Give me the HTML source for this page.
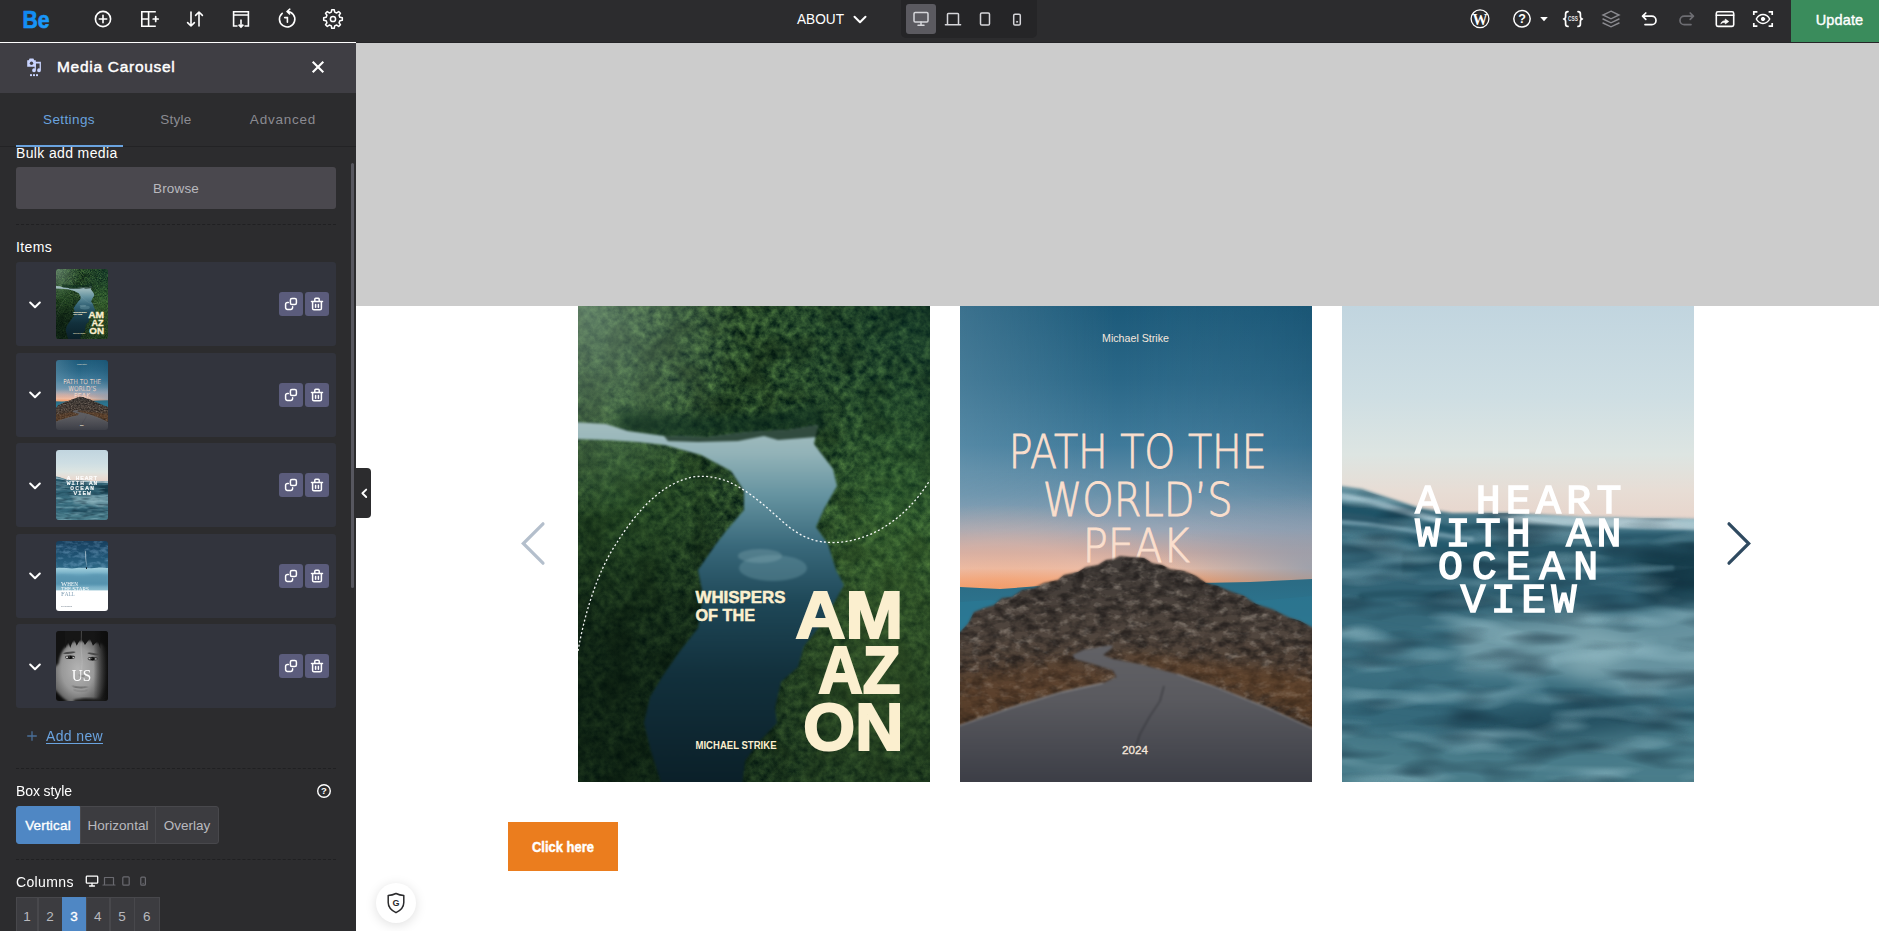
<!DOCTYPE html>
<html lang="en">
<head>
<meta charset="utf-8">
<title>BeBuilder - Media Carousel</title>
<style>
*{box-sizing:border-box;margin:0;padding:0}
html,body{width:1879px;height:931px;overflow:hidden;background:#fff;font-family:"Liberation Sans",sans-serif;}
body{position:relative}
.abs{position:absolute}
svg{display:block}
/* ---------- top bar ---------- */
#topbar{position:absolute;left:0;top:0;width:1879px;height:42px;background:#2c2c2e;z-index:5}
#tbshadow{position:absolute;left:356px;top:42px;width:1523px;height:1px;background:#252527;z-index:5}
#topbar .ico{position:absolute;top:9px;width:20px;height:20px}
#topbar .ico svg{width:20px;height:20px;fill:none;stroke:#fff;stroke-width:1.6;stroke-linecap:round;stroke-linejoin:round}
#logo{position:absolute;left:21px;top:6px;font-weight:bold;font-size:24px;letter-spacing:-1.5px;color:#2d8df6;line-height:26px}
#pagename{position:absolute;left:797px;top:10px;font-size:14px;color:#fff;line-height:18px;letter-spacing:-0.2px}
#devices{position:absolute;left:901px;top:0;width:136px;height:38px;background:#252527;border-radius:0 0 5px 5px}
#devices .act{position:absolute;left:5px;top:4px;width:30px;height:30px;background:#5b5a60;border-radius:3px}
#update{position:absolute;left:1791px;top:0;width:88px;height:42px;background:#3a8c5c;color:#fff;font-size:14.5px;font-weight:normal;-webkit-text-stroke:.4px #fff;letter-spacing:.12px;line-height:40px;text-align:center;padding-left:9px}
/* ---------- left panel ---------- */
#panel{position:absolute;left:0;top:43px;width:356px;height:888px;background:#2c2c2e;overflow:hidden;z-index:4}
#phead{position:absolute;left:0;top:-1px;width:356px;height:51px;background:#3f3e44}
#phead .title{position:absolute;left:57px;top:14.400px;font-size:15.5px;font-weight:normal;-webkit-text-stroke:.45px #fff;letter-spacing:.71px;color:#fff;line-height:22px}
#tabs{position:absolute;left:0;top:50px;width:356px;height:54px;border-bottom:1px solid #232325}
#tabs span{position:absolute;top:18px;font-size:13.5px;letter-spacing:.4px;line-height:18px;color:#8b8b92;transform:translateX(-50%);white-space:nowrap}
#tabs .on{color:#6aa3df}
#tabs i{position:absolute;left:16px;top:52px;width:107px;height:2px;background:#6aa3df}
.lbl{position:absolute;left:16px;letter-spacing:.36px;font-size:14px;color:#fff;line-height:18px;white-space:nowrap}
.dash{position:absolute;left:16px;width:320px;height:0;border-top:1px dashed #202022}
#browse{letter-spacing:.16px;position:absolute;left:16px;top:124px;width:320px;height:42px;background:#4a484e;border-radius:3px;color:#b9b9be;font-size:13.5px;text-align:center;line-height:43px}
.item{position:absolute;left:16px;width:320px;height:84px;background:#32343d;border-radius:3px}
.item .th{position:absolute;left:40px;top:7px;width:52px;height:70px;border-radius:3px;overflow:hidden}
.item .b{position:absolute;top:30px;width:24px;height:24px;background:#5b5c7c;border-radius:3px}
.item .b1{left:263px}.item .b2{left:289px}
.item svg.chev{position:absolute;left:13px;top:38.500px;width:12px;height:8px}
#scroll{position:absolute;left:351.400px;top:120px;width:2.400px;height:425px;background:#57575f;border-radius:2px}
.seg.first{border-radius:3px 0 0 3px}.seg.last{border-radius:0 3px 3px 0}
.seg{position:absolute;height:38px;font-size:13.5px;line-height:38px;text-align:center;color:#b9b9be;background:#3c3c40;border:1px solid #48484c;white-space:nowrap}
.seg.on{background:#4f87c4;border-color:#4f87c4;color:#fff;-webkit-text-stroke:.35px #fff;letter-spacing:.18px}
.addnew{letter-spacing:.36px;position:absolute;left:46px;top:684px;font-size:14px;line-height:18px;color:#6aa3df;text-decoration:underline;text-underline-offset:2px;white-space:nowrap}
.num{position:absolute;top:854px;height:40px;font-size:13.500px;line-height:38px;text-align:center;color:#b9b9be;background:#3c3c40;border:1px solid #48484c}
.num.on{background:#4f87c4;border-color:#4f87c4;color:#fff;-webkit-text-stroke:.35px #fff}
.item .b svg{display:block}
/* ---------- canvas ---------- */
#grey{position:absolute;left:356px;top:43px;width:1523px;height:263px;background:#cccccc}
.cover{position:absolute;top:306px;width:352px;height:476px;overflow:hidden}
#cta{position:absolute;left:508px;top:822px;width:110px;height:49px;background:#eb7d1e;color:#fff;font-size:15px;font-weight:bold;text-align:center;line-height:50px}
#handle{position:absolute;left:356px;top:468px;width:15px;height:50px;background:#2c2c2e;border-radius:0 4px 4px 0;z-index:6}
#shield{position:absolute;left:376px;top:883px;width:40px;height:40px;border-radius:50%;background:#fff;box-shadow:0 2px 12px rgba(0,0,0,.13)}
</style>
</head>
<body>
<svg width="0" height="0" style="position:absolute">
<symbol id="cov1" viewBox="0 0 352 476" preserveAspectRatio="none">
  <defs>
    <linearGradient id="c1g" x1="0" y1="0" x2="0" y2="1">
      <stop offset="0" stop-color="#2f5c3c"/>
      <stop offset=".25" stop-color="#264f30"/>
      <stop offset=".5" stop-color="#234d2a"/>
      <stop offset=".7" stop-color="#16371f"/>
      <stop offset="1" stop-color="#0d2515"/>
    </linearGradient>
    <linearGradient id="c1r" x1="0" y1="118" x2="0" y2="476" gradientUnits="userSpaceOnUse">
      <stop offset="0" stop-color="#a3bdbf"/>
      <stop offset=".08" stop-color="#93b3b8"/>
      <stop offset=".2" stop-color="#6593a0"/>
      <stop offset=".34" stop-color="#39697b"/>
      <stop offset=".5" stop-color="#1e4757"/>
      <stop offset=".7" stop-color="#12303c"/>
      <stop offset="1" stop-color="#0b2029"/>
    </linearGradient>
    <radialGradient id="c1d" cx=".08" cy=".8" r=".6" gradientTransform="translate(0 0) scale(1 1)">
      <stop offset="0" stop-color="#06150c" stop-opacity=".62"/>
      <stop offset=".45" stop-color="#06150c" stop-opacity=".42"/>
      <stop offset="1" stop-color="#07170e" stop-opacity="0"/>
    </radialGradient>
    <radialGradient id="c1tr" cx="1" cy="0" r=".5">
      <stop offset="0" stop-color="#06302e" stop-opacity=".38"/>
      <stop offset="1" stop-color="#06302e" stop-opacity="0"/>
    </radialGradient>
    <radialGradient id="c1ml" cx=".12" cy=".4" r=".3">
      <stop offset="0" stop-color="#4f9440" stop-opacity=".34"/>
      <stop offset="1" stop-color="#5a9a3a" stop-opacity="0"/>
    </radialGradient>
    <radialGradient id="c1mr" cx=".92" cy=".42" r=".32">
      <stop offset="0" stop-color="#4f9440" stop-opacity=".3"/>
      <stop offset="1" stop-color="#5a9a3a" stop-opacity="0"/>
    </radialGradient>
    <radialGradient id="c1l" cx=".85" cy=".78" r=".4">
      <stop offset="0" stop-color="#5d8a3c" stop-opacity=".45"/>
      <stop offset="1" stop-color="#5d8a3c" stop-opacity="0"/>
    </radialGradient>
    <filter id="c1n" x="0" y="0" width="100%" height="100%" color-interpolation-filters="sRGB">
      <feTurbulence type="fractalNoise" baseFrequency="0.13" numOctaves="4" seed="7"/>
      <feColorMatrix type="matrix" values="0.44 0 0 0 -0.058  0.54 0 0 0 0.028  0.25 0 0 0 0.04  0 0 0 0 1"/>
    </filter>
    <filter id="c1h" x="0" y="0" width="100%" height="100%" color-interpolation-filters="sRGB">
      <feTurbulence type="fractalNoise" baseFrequency="0.035" numOctaves="2" seed="3"/>
      <feColorMatrix type="matrix" values="0 0 0 0 0.02  0 0 0 0 0.08  0 0 0 0 0.04  0 3 0 0 -1.25"/>
    </filter>
    <radialGradient id="c1z" cx=".02" cy="0" r=".45">
      <stop offset="0" stop-color="#86a68f" stop-opacity=".6"/>
      <stop offset="1" stop-color="#86a68f" stop-opacity="0"/>
    </radialGradient>
    <linearGradient id="c1k" x1="0" y1="0" x2="0" y2="1">
      <stop offset="0" stop-color="#04120a" stop-opacity="0"/>
      <stop offset=".5" stop-color="#04120a" stop-opacity=".05"/>
      <stop offset=".72" stop-color="#04120a" stop-opacity=".28"/>
      <stop offset="1" stop-color="#04120a" stop-opacity=".38"/>
    </linearGradient>
    <filter id="c1bb" x="-10%" y="-60%" width="120%" height="220%" color-interpolation-filters="sRGB"><feGaussianBlur stdDeviation="5"/></filter>
    <filter id="c1b" x="-5%" y="-5%" width="110%" height="110%" color-interpolation-filters="sRGB"><feGaussianBlur stdDeviation="1.2"/></filter>
    <clipPath id="c1c"><rect width="352" height="476"/></clipPath>
  </defs>
  <g clip-path="url(#c1c)">
    <rect width="352" height="476" fill="url(#c1g)"/>
    <rect width="352" height="476" filter="url(#c1n)"/>
    <rect width="352" height="476" filter="url(#c1h)" opacity=".4"/>
    <rect width="352" height="476" fill="url(#c1ml)"/>
    <rect width="352" height="476" fill="url(#c1mr)"/>
    <rect width="352" height="476" fill="url(#c1l)"/>
    <rect width="352" height="476" fill="url(#c1k)"/>
    <rect width="352" height="476" fill="url(#c1d)"/>
    <rect width="352" height="476" fill="url(#c1z)"/>
    <rect width="352" height="476" fill="url(#c1tr)"/>
    <path d="M40 104 C100 112 180 110 244 100 L246 124 L170 130 L86 134 L40 128 Z" fill="#0c2a1e" opacity=".6" filter="url(#c1bb)"/>
    <!-- river -->
    <g filter="url(#c1b)">
      <path d="M-4 116 L28 118 L50 125 L86 130 L130 131 L170 126 L210 124 L240 119 L236 138 L255 163 L259 180 L246 203 L238 221 L250 238 L258 264 L266 279 L246 315 L226 340 L220 361 L203 376 L197 402 L199 417 L180 437 L167 455 L164 480 L84 480 L72 442 L66 417 L72 391 L84 371 L102 345 L120 322 L125 289 L120 264 L138 238 L148 225 L166 204 L166 185 L153 165 L123 149 L87 139 L60 136 L30 134 L-4 133 Z" fill="url(#c1r)"/>
      <path d="M86 130 L130 131 L170 126 L210 124 L240 119 L238 131 L200 134 L186 130 L160 135 L120 136 L90 135 Z" fill="#16301f" opacity=".8"/>
      <ellipse cx="195" cy="262" rx="34" ry="13" fill="#6e9aa8" opacity=".4"/>
      <ellipse cx="182" cy="250" rx="22" ry="7" fill="#86abb4" opacity=".35"/>
    </g>
    <!-- dotted line -->
    <path d="M0 345 C8 300 22 262 38 238 C56 210 80 178 115 171 C150 166 176 190 204 215 C222 231 236 237 258 236.500 C290 235 326 216 352 174" fill="none" stroke="#fff" stroke-width="1.300" stroke-dasharray="2 2.300" opacity=".95"/>
    <!-- text -->
    <g fill="#fbefcf" font-family="Liberation Sans, sans-serif" font-weight="bold">
      <text x="117.500" y="296.600" font-size="16.500" textLength="90" stroke="#fbefcf" stroke-width=".5" lengthAdjust="spacingAndGlyphs">WHISPERS</text>
      <text x="117.500" y="315.200" font-size="16.500" textLength="59.500" stroke="#fbefcf" stroke-width=".5" lengthAdjust="spacingAndGlyphs">OF THE</text>
      <text x="217.600" y="331.600" font-size="66" textLength="107.500" lengthAdjust="spacingAndGlyphs" stroke="#fbefcf" stroke-width="2.2" stroke-linejoin="miter">AM</text>
      <text x="240.300" y="387.400" font-size="66" textLength="82" lengthAdjust="spacingAndGlyphs" stroke="#fbefcf" stroke-width="2.2" stroke-linejoin="miter">AZ</text>
      <text x="225.300" y="443.900" font-size="66" textLength="100" lengthAdjust="spacingAndGlyphs" stroke="#fbefcf" stroke-width="2.2" stroke-linejoin="miter">ON</text>
      <text x="117.500" y="442.700" font-size="10.500" textLength="81" lengthAdjust="spacingAndGlyphs">MICHAEL STRIKE</text>
    </g>
  </g>
</symbol>

<symbol id="cov2" viewBox="0 0 352 476" preserveAspectRatio="none">
  <defs>
    <linearGradient id="c2s" x1="0" y1="0" x2="0" y2="290" gradientUnits="userSpaceOnUse">
      <stop offset="0" stop-color="#1c5a7a"/>
      <stop offset=".25" stop-color="#2a6787"/>
      <stop offset=".48" stop-color="#3f7a9a"/>
      <stop offset=".65" stop-color="#6a92ab"/>
      <stop offset=".77" stop-color="#9aa6b6"/>
      <stop offset=".85" stop-color="#c6a9a3"/>
      <stop offset=".905" stop-color="#e8bca6"/>
      <stop offset=".94" stop-color="#f0a274"/>
      <stop offset=".965" stop-color="#ef945c"/>
      <stop offset="1" stop-color="#ec8a54"/>
    </linearGradient>
    <radialGradient id="c2o" cx="40" cy="278" r="190" gradientUnits="userSpaceOnUse" gradientTransform="translate(0 278) scale(1 .42) translate(0 -278)">
      <stop offset="0" stop-color="#f6b08a" stop-opacity=".4"/>
      <stop offset=".5" stop-color="#f2bba4" stop-opacity=".4"/>
      <stop offset="1" stop-color="#f2b398" stop-opacity="0"/>
    </radialGradient>
    <radialGradient id="c2q" cx="352" cy="262" r="150" gradientUnits="userSpaceOnUse" gradientTransform="translate(0 262) scale(1 .5) translate(0 -262)">
      <stop offset="0" stop-color="#8096ad" stop-opacity=".7"/>
      <stop offset="1" stop-color="#8096ad" stop-opacity="0"/>
    </radialGradient>
    <linearGradient id="c2l" x1="0" y1="0" x2="1" y2="0">
      <stop offset="0" stop-color="#8fb0c2" stop-opacity=".35"/>
      <stop offset=".45" stop-color="#8fb0c2" stop-opacity="0"/>
      <stop offset="1" stop-color="#0b3c58" stop-opacity=".18"/>
    </linearGradient>
    <linearGradient id="c2m" x1="0" y1="276" x2="0" y2="335" gradientUnits="userSpaceOnUse">
      <stop offset="0" stop-color="#2b6c85"/>
      <stop offset="1" stop-color="#2f7e99"/>
    </linearGradient>
    <linearGradient id="c2h" x1="0" y1="250" x2="0" y2="430" gradientUnits="userSpaceOnUse">
      <stop offset="0" stop-color="#3f3a37"/>
      <stop offset=".45" stop-color="#51463e"/>
      <stop offset=".75" stop-color="#574232"/>
      <stop offset="1" stop-color="#4a3626"/>
    </linearGradient>
    <linearGradient id="c2r" x1="0" y1="338" x2="0" y2="476" gradientUnits="userSpaceOnUse">
      <stop offset="0" stop-color="#626266"/>
      <stop offset=".4" stop-color="#5a5a5f"/>
      <stop offset=".75" stop-color="#494a51"/>
      <stop offset="1" stop-color="#3c3e46"/>
    </linearGradient>
    <filter id="c2n" x="0" y="0" width="100%" height="100%" color-interpolation-filters="sRGB">
      <feTurbulence type="fractalNoise" baseFrequency="0.09 0.13" numOctaves="3" seed="11"/>
      <feColorMatrix type="matrix" values="0 0 0 0 0.62  0 0 0 0 0.58  0 0 0 0 0.54  2.8 0 0 0 -1.45"/>
    </filter>
    <filter id="c2d" x="0" y="0" width="100%" height="100%" color-interpolation-filters="sRGB">
      <feTurbulence type="fractalNoise" baseFrequency="0.08 0.12" numOctaves="3" seed="4"/>
      <feColorMatrix type="matrix" values="0 0 0 0 0.08  0 0 0 0 0.07  0 0 0 0 0.07  0 2.6 0 0 -1.0"/>
    </filter>
    <filter id="c2b" x="-5%" y="-5%" width="110%" height="110%" color-interpolation-filters="sRGB"><feGaussianBlur stdDeviation=".8"/></filter>
    <filter id="c2bb" x="-20%" y="-40%" width="140%" height="180%" color-interpolation-filters="sRGB"><feGaussianBlur stdDeviation="5"/></filter>
    <linearGradient id="c2lg" x1="0" y1="0" x2="0" y2="1"><stop offset="0" stop-color="#fff"/><stop offset=".55" stop-color="#fff"/><stop offset=".82" stop-color="#000"/></linearGradient>
    <mask id="c2lm" maskUnits="userSpaceOnUse" x="0" y="0" width="352" height="300"><rect width="352" height="300" fill="url(#c2lg)"/></mask>
    <clipPath id="c2c"><rect width="352" height="476"/></clipPath>
    <clipPath id="c2hc"><path d="M-2 328 L8 318 L14 306 L24 302 L34 299 L42 292 L52 291 L62 284 L74 282 L84 277 L98 274 L104 269 L118 266 L126 261 L138 259 L146 254 L154 253 L160 250 L170 251 L184 252 L192 257 L202 259 L210 263 L224 265 L236 270 L246 277 L258 280 L270 285 L284 290 L296 298 L312 303 L328 311 L340 315 L354 322 L354 430 L-2 430 Z"/></clipPath>
  </defs>
  <g clip-path="url(#c2c)">
    <rect width="352" height="300" fill="url(#c2s)"/>
    <rect width="352" height="300" fill="url(#c2l)" opacity=".8" mask="url(#c2lm)"/>
    <rect width="352" height="300" fill="url(#c2q)"/>
    <rect width="352" height="300" fill="url(#c2o)"/>
    <!-- title (PEAK is partly behind the hill) -->
    <g fill="#fbdfcd" font-family="DejaVu Sans, Liberation Sans, sans-serif" font-weight="200" font-size="46" text-anchor="middle" stroke="#fbdfcd" stroke-width=".85">
      <text x="177.700" y="161.800" textLength="258" lengthAdjust="spacingAndGlyphs">PATH TO THE</text>
      <text x="177.650" y="209.600" textLength="190" lengthAdjust="spacingAndGlyphs">WORLD’S</text>
      <text x="176.250" y="256.400" textLength="107" lengthAdjust="spacingAndGlyphs">PEAK</text>
    </g>
    <!-- distant mountains -->
    <path d="M0 281 L40 283 L80 280 L80 340 L0 340 Z" fill="url(#c2m)"/>
    <path d="M240 277 L290 276 L352 273 L352 340 L240 340 Z" fill="url(#c2m)"/>
    <path d="M0 296 L30 294 L70 300 L70 340 L0 340 Z" fill="#2a7893" opacity=".8"/>
    <path d="M285 296 L352 290 L352 330 L300 320 Z" fill="#2c7590" opacity=".8"/>
    <!-- hill -->
    <g filter="url(#c2b)">
      <path d="M-2 328 L8 318 L14 306 L24 302 L34 299 L42 292 L52 291 L62 284 L74 282 L84 277 L98 274 L104 269 L118 266 L126 261 L138 259 L146 254 L154 253 L160 250 L170 251 L184 252 L192 257 L202 259 L210 263 L224 265 L236 270 L246 277 L258 280 L270 285 L284 290 L296 298 L312 303 L328 311 L340 315 L354 322 L354 430 L-2 430 Z" fill="url(#c2h)"/>
    </g>
    <g clip-path="url(#c2hc)">
      <rect y="245" width="352" height="190" filter="url(#c2n)" opacity=".6"/>
      <rect y="245" width="352" height="190" filter="url(#c2d)" opacity=".6"/>
      <path d="M-2 372 L60 362 L110 352 L112 357 L140 366 L157 375 L150 384 L95 390 L40 404 L-2 420 Z" fill="#664428" opacity=".36" filter="url(#c2bb)"/>
      <path d="M145 348 L200 364 L260 378 L320 396 L354 414 L354 372 L300 362 L240 356 L180 348 Z" fill="#6c4626" opacity=".42" filter="url(#c2bb)"/>
    </g>
    <!-- road -->
    <g filter="url(#c2b)">
      <path d="M148 339.500 L123 344 L112.500 349 L115 353 L133 358 L153 364.500 L156.500 371 L143 377 L102 386 L51 401.600 L-2 420 L-2 478 L354 478 L354 423 L307 401.600 L255.600 381 L217 368 L179 358 L153 353 L143 349 L151 343 L153.500 339.500 Z" fill="url(#c2r)"/>
      <path d="M-2 420 L51 401.600 L102 386 L143 377" fill="none" stroke="#9a9a9c" stroke-width="1.3" opacity=".75"/>
      <path d="M217 368 L255.600 381 L307 401.600 L354 423" fill="none" stroke="#9a9a9c" stroke-width="1.3" opacity=".7"/>
      <path d="M204 380 L200 395 L190 410 L180 428 L174 446" fill="none" stroke="#24252b" stroke-width="1" opacity=".8"/>
    </g>
    <g fill="#f6e7dd" font-family="Liberation Sans, sans-serif" text-anchor="middle">
      <text x="175.500" y="36.300" font-size="11" textLength="67" lengthAdjust="spacingAndGlyphs">Michael Strike</text>
      <text x="175" y="447.600" font-size="11" stroke="#f6e7dd" stroke-width=".3" textLength="26" lengthAdjust="spacingAndGlyphs">2024</text>
    </g>
  </g>
</symbol>

<symbol id="cov3" viewBox="0 0 352 476" preserveAspectRatio="none">
  <defs>
    <linearGradient id="c3s" x1="0" y1="0" x2="0" y2="225" gradientUnits="userSpaceOnUse">
      <stop offset="0" stop-color="#c1d5df"/>
      <stop offset=".4" stop-color="#cedee3"/>
      <stop offset=".66" stop-color="#dde5e2"/>
      <stop offset=".82" stop-color="#e7ddd5"/>
      <stop offset="1" stop-color="#e8d2c8"/>
    </linearGradient>
    <linearGradient id="c3w" x1="0" y1="180" x2="0" y2="476" gradientUnits="userSpaceOnUse">
      <stop offset="0" stop-color="#5f8b99"/>
      <stop offset=".12" stop-color="#3f7082"/>
      <stop offset=".3" stop-color="#2f6073"/>
      <stop offset=".55" stop-color="#3b6f80"/>
      <stop offset=".8" stop-color="#34687a"/>
      <stop offset="1" stop-color="#3a6e7e"/>
    </linearGradient>
    <filter id="c3n" x="0" y="0" width="100%" height="100%" color-interpolation-filters="sRGB">
      <feTurbulence type="fractalNoise" baseFrequency="0.012 0.05" numOctaves="2" seed="5"/>
      <feColorMatrix type="matrix" values="0 0 0 0 0.62  0 0 0 0 0.78  0 0 0 0 0.82  2.6 0 0 0 -1.25"/>
    </filter>
    <filter id="c3d" x="0" y="0" width="100%" height="100%" color-interpolation-filters="sRGB">
      <feTurbulence type="fractalNoise" baseFrequency="0.014 0.055" numOctaves="2" seed="17"/>
      <feColorMatrix type="matrix" values="0 0 0 0 0.06  0 0 0 0 0.16  0 0 0 0 0.22  0 2.6 0 0 -1.2"/>
    </filter>
    <filter id="c3b" x="-5%" y="-5%" width="110%" height="110%" color-interpolation-filters="sRGB"><feGaussianBlur stdDeviation="1.6"/></filter>
    <filter id="c3bb" x="-30%" y="-30%" width="160%" height="160%" color-interpolation-filters="sRGB"><feGaussianBlur stdDeviation="9"/></filter>
    <clipPath id="c3c"><rect width="352" height="476"/></clipPath>
    <clipPath id="c3wc"><path d="M-4 180 L20 184 L50 194 L78 203 L110 207 L170 207 L240 211 L300 212 L356 213 L356 480 L-4 480 Z"/></clipPath>
  </defs>
  <g clip-path="url(#c3c)">
    <rect width="352" height="240" fill="url(#c3s)"/>
    <g filter="url(#c3b)">
      <path d="M-8 179 L20 183 L50 193 L78 202 L110 207 L170 207 L240 211 L300 212 L360 213 L360 490 L-8 490 Z" fill="url(#c3w)"/>
      <path d="M150 209 L240 211 L300 212 L360 213 L360 224 L300 223 L230 221 L170 216 Z" fill="#a5bfc8" opacity=".75"/>
      <path d="M-8 196 L40 204 L90 216 L60 222 L-8 214 Z" fill="#1f4a5c" opacity=".7"/>
      <path d="M60 246 L170 232 L250 240 L352 236 L352 258 L250 262 L160 256 L60 268 Z" fill="#204c5e" opacity=".6"/>
    </g>
    <g filter="url(#c3bb)">
      <path d="M230 326 L372 300 L372 382 L300 390 L225 372 Z" fill="#7aa3ae" opacity=".7"/>
      <path d="M110 408 L260 392 L340 420 L260 440 L130 436 Z" fill="#1b4454" opacity=".65"/>
      <path d="M-20 326 L120 348 L210 372 L100 384 L-20 370 Z" fill="#3e7284" opacity=".5"/>
      <path d="M120 290 L260 280 L300 300 L200 312 Z" fill="#1f4a5b" opacity=".5"/>
      <path d="M290 246 L372 240 L372 296 L300 292 Z" fill="#123644" opacity=".85"/>
      <path d="M110 318 L250 306 L300 340 L250 372 L120 364 Z" fill="#84abb5" opacity=".7"/>
      <path d="M-20 420 L150 440 L372 410 L372 490 L-20 490 Z" fill="#5a8b97" opacity=".5"/>
    </g>
    <g filter="url(#c3b)" fill="none" stroke-linecap="round">
      <path d="M-5 190 C25 192 55 204 95 214" stroke="#a8c6d1" stroke-width="6" opacity=".85"/>
      <path d="M-5 203 C30 204 60 214 110 224" stroke="#1c5266" stroke-width="7" opacity=".8"/>
      <path d="M-5 216 C30 216 70 226 130 233" stroke="#8fb4c3" stroke-width="4" opacity=".6"/>
      <path d="M-5 230 C40 228 90 240 150 244" stroke="#1d5468" stroke-width="8" opacity=".7"/>
      <path d="M120 222 C170 216 220 226 262 222" stroke="#1b4656" stroke-width="6" opacity=".6"/>
      <path d="M170 214 C240 216 300 217 356 219" stroke="#b4cad2" stroke-width="8" opacity=".8"/>
      <path d="M230 232 C270 228 320 232 356 230" stroke="#1f4f60" stroke-width="6" opacity=".55"/>
      <path d="M150 268 C200 258 260 268 330 262" stroke="#5f8f9f" stroke-width="5" opacity=".5"/>
      <path d="M20 290 C80 282 140 296 200 292" stroke="#1c4858" stroke-width="7" opacity=".5"/>
    </g>
    <g clip-path="url(#c3wc)">
      <rect y="180" width="352" height="296" filter="url(#c3n)" opacity=".55"/>
      <rect y="180" width="352" height="296" filter="url(#c3d)" opacity=".5"/>
    </g>
    <g fill="#fff" font-family="Liberation Mono, monospace" font-weight="normal" font-size="41.500" text-anchor="middle" stroke="#fff" stroke-width="1.500" stroke-linejoin="miter">
      <text x="176.300" y="206.500" textLength="206" lengthAdjust="spacing">A HEART</text>
      <text x="176.300" y="239.800" textLength="206" lengthAdjust="spacing">WITH AN</text>
      <text x="176.100" y="273" textLength="160" lengthAdjust="spacing">OCEAN</text>
      <text x="176.500" y="306" textLength="116" lengthAdjust="spacing">VIEW</text>
    </g>
  </g>
</symbol>

<symbol id="cov4" viewBox="0 0 352 476" preserveAspectRatio="none">
  <defs>
    <linearGradient id="c4s" x1="0" y1="0" x2="0" y2="190" gradientUnits="userSpaceOnUse">
      <stop offset="0" stop-color="#173f5e"/><stop offset=".5" stop-color="#1f5272"/><stop offset="1" stop-color="#2f6a88"/>
    </linearGradient>
    <linearGradient id="c4i" x1="0" y1="180" x2="0" y2="340" gradientUnits="userSpaceOnUse">
      <stop offset="0" stop-color="#a5d2e0"/><stop offset=".3" stop-color="#6faac2"/><stop offset=".7" stop-color="#5f9db8"/><stop offset="1" stop-color="#93c2d2"/>
    </linearGradient>
    <linearGradient id="c4b" x1="0" y1="1" x2="0" y2="0">
      <stop offset="0" stop-color="#fff" stop-opacity=".95"/><stop offset="1" stop-color="#cfe6f2" stop-opacity=".15"/>
    </linearGradient>
    <filter id="c4n" x="0" y="0" width="100%" height="100%" color-interpolation-filters="sRGB">
      <feTurbulence type="fractalNoise" baseFrequency="0.02 0.035" numOctaves="3" seed="9"/>
      <feColorMatrix type="matrix" values="0 0 0 0 0.55  0 0 0 0 0.72  0 0 0 0 0.85  2.8 0 0 0 -1.2"/>
    </filter>
    <filter id="c4g" x="-20%" y="-40%" width="140%" height="180%"><feGaussianBlur stdDeviation="3"/></filter><filter id="c4h" x="-20%" y="-60%" width="140%" height="220%"><feGaussianBlur stdDeviation="9"/></filter>
    <clipPath id="c4c"><rect width="352" height="476"/></clipPath>
  </defs>
  <g clip-path="url(#c4c)">
    <rect width="352" height="200" fill="url(#c4s)"/>
    <rect width="352" height="185" filter="url(#c4n)" opacity=".38"/>
    <path d="M-5 186 C40 176 90 192 140 184 C180 178 230 190 280 182 C310 178 340 186 357 182 L357 340 L-5 340 Z" fill="url(#c4i)"/>
    <path d="M-5 230 C60 215 150 245 230 228 C290 218 330 232 357 226 L357 300 L-5 300 Z" fill="#4d89a6" opacity=".5" filter="url(#c4h)"/>
    <path d="M206 178 L192 56 L204 54 Z" fill="url(#c4b)" filter="url(#c4g)" opacity=".7"/>
    <path d="M206 180 L196 70 L201 69 Z" fill="#fff" opacity=".55"/>
    <path d="M203 190 L203.500 178 A3 3 0 0 1 209 178 L210 190 Z" fill="#0f1d28"/>
    <rect y="336" width="352" height="140" fill="#fff"/>
    <g font-family="Liberation Serif, serif" font-size="45" fill="#fff">
      <text x="34" y="303">W<tspan font-size="35">HEN</tspan></text>
      <text x="34" y="337"><tspan font-size="35">THE </tspan>S<tspan font-size="35">TARS</tspan></text>
      <text x="34" y="371" fill="#7f9db2">F<tspan font-size="35">ALL</tspan></text>
    </g>
    <text x="34" y="449" font-family="Liberation Sans, sans-serif" font-size="9" fill="#5a6a78">MICHAEL STRIKE</text>
  </g>
</symbol>

<symbol id="cov5" viewBox="0 0 352 476" preserveAspectRatio="none">
  <defs>
    <radialGradient id="c5f" cx=".42" cy=".55" r=".62">
      <stop offset="0" stop-color="#b4b4b4"/><stop offset=".5" stop-color="#999"/><stop offset=".85" stop-color="#5c5c5c"/><stop offset="1" stop-color="#2a2a2a"/>
    </radialGradient>
    <linearGradient id="c5r" x1="0" y1="0" x2="1" y2="0">
      <stop offset=".72" stop-color="#0c0c0c" stop-opacity="0"/><stop offset="1" stop-color="#0c0c0c" stop-opacity=".95"/>
    </linearGradient>
    <filter id="c5g" x="-20%" y="-20%" width="140%" height="140%" color-interpolation-filters="sRGB"><feGaussianBlur stdDeviation="7"/></filter>
    <filter id="c5s" x="-20%" y="-20%" width="140%" height="140%" color-interpolation-filters="sRGB"><feGaussianBlur stdDeviation="2.500"/></filter>
    <clipPath id="c5c"><rect width="352" height="476"/></clipPath>
  </defs>
  <g clip-path="url(#c5c)">
    <rect width="352" height="476" fill="url(#c5f)"/>
    <path d="M-20 -20 L372 -20 L372 170 C350 110 320 80 280 84 C250 60 210 58 176 72 C140 60 100 74 70 104 C40 130 25 170 18 220 L-20 260 Z" fill="#121212" filter="url(#c5g)"/>
    <path d="M60 120 L80 60 L96 116 L120 50 L140 100 L170 46 L196 96 L230 50 L250 100 L284 64 L300 120 L300 0 L60 0 Z" fill="#161616" filter="url(#c5s)"/>
    <rect width="352" height="476" fill="url(#c5r)"/>
    <path d="M-20 380 C10 420 40 455 90 485 L-20 490 Z" fill="#0d0d0d" filter="url(#c5g)"/>
    <path d="M120 470 C180 452 260 452 330 476 L330 490 L120 490 Z" fill="#1a1a1a" filter="url(#c5g)"/>
    <g filter="url(#c5s)">
      <ellipse cx="95" cy="178" rx="34" ry="13" fill="#3a3a3a"/><ellipse cx="248" cy="188" rx="34" ry="13" fill="#3a3a3a"/>
      <ellipse cx="96" cy="179" rx="13" ry="11" fill="#0c0c0c"/><ellipse cx="247" cy="189" rx="13" ry="11" fill="#0c0c0c"/>
      <ellipse cx="74" cy="178" rx="8" ry="5" fill="#d8d8d8"/><ellipse cx="118" cy="181" rx="7" ry="4" fill="#d0d0d0"/>
      <ellipse cx="226" cy="188" rx="7" ry="4" fill="#d0d0d0"/><ellipse cx="269" cy="190" rx="7" ry="4" fill="#c8c8c8"/>
      <ellipse cx="90" cy="148" rx="42" ry="7" fill="#4a4a4a" transform="rotate(-6 90 148)"/><ellipse cx="254" cy="156" rx="42" ry="7" fill="#4a4a4a" transform="rotate(8 254 156)"/>
      <path d="M104 372 C140 380 186 384 222 378 C190 392 136 390 104 372 Z" fill="#454545"/>
      <path d="M150 296 C164 306 190 306 204 296 C196 312 160 312 150 296 Z" fill="#5a5a5a"/>
      <path d="M120 400 C150 412 190 412 214 402" fill="none" stroke="#777" stroke-width="6"/>
    </g>
    <circle cx="92" cy="176" r="2.500" fill="#f0f0f0"/><circle cx="243" cy="186" r="2.500" fill="#f0f0f0"/>
    <path d="M172 0 L170 120 L177 200 L174 262" fill="none" stroke="#cfcfcf" stroke-width="2.500" opacity=".75"/>
    <text x="172" y="342" font-family="Liberation Serif, serif" font-size="112" fill="#fff" text-anchor="middle" textLength="132" lengthAdjust="spacingAndGlyphs">US</text>
  </g>
</symbol>

</svg>
<!-- CANVAS -->
<div id="grey"></div>
<div class="cover" id="c1" style="left:578px;background:#1d4a38"><svg width="352" height="476"><use href="#cov1" width="352" height="476"/></svg></div>
<div class="cover" id="c2" style="left:960px;background:#3a6a80"><svg width="352" height="476"><use href="#cov2" width="352" height="476"/></svg></div>
<div class="cover" id="c3" style="left:1342px;background:#6a98a8"><svg width="352" height="476"><use href="#cov3" width="352" height="476"/></svg></div>
<div id="cta"><svg width="110" height="49" viewBox="0 0 110 49"><text x="24" y="30" font-family="Liberation Sans, sans-serif" font-size="14.800" fill="#fff" stroke="#fff" stroke-width=".45" textLength="62" lengthAdjust="spacingAndGlyphs">Click here</text></svg></div>
<div id="handle"><svg width="15" height="50" viewBox="0 0 15 50"><path d="M10.200 21.600L6.400 25.300L10.200 29" fill="none" stroke="#fff" stroke-width="1.900" stroke-linecap="round" stroke-linejoin="round"/></svg></div>
<svg width="30" height="50" viewBox="0 0 30 50" style="position:absolute;left:518px;top:519px"><path d="M25 4.800L5.300 24.500L25 44.200" fill="none" stroke="#b4bfcc" stroke-width="3.200" stroke-linecap="round" stroke-linejoin="miter"/></svg>
<svg width="30" height="50" viewBox="0 0 30 50" style="position:absolute;left:1724px;top:519px"><path d="M5 4.800L24.700 24.500L5 44.200" fill="none" stroke="#2f4a60" stroke-width="3.200" stroke-linecap="round" stroke-linejoin="miter"/></svg>
<div id="shield"><svg width="40" height="40" viewBox="0 0 40 40"><path d="M20 10.500C22.800 11.800 25.300 12.300 27.800 12.400V19.500C27.800 23.800 25 27.200 20 29.700C15 27.200 12.200 23.800 12.200 19.500V12.400C14.700 12.300 17.200 11.800 20 10.500Z" fill="none" stroke="#2a2a2c" stroke-width="1.500" stroke-linejoin="round"/><text x="20" y="23" font-family="Liberation Sans, sans-serif" font-weight="bold" font-size="9" fill="#2a2a2c" text-anchor="middle">G</text></svg></div>

<div id="tbshadow"></div>
<!-- TOP BAR -->
<div id="topbar">
  <div id="devices"><div class="act"></div></div>
  <div id="update">Update</div>
<svg id="topsvg" width="1879" height="43" viewBox="0 0 1879 43" style="position:absolute;left:0;top:0" fill="none" stroke="#fff" stroke-width="1.6" stroke-linecap="round" stroke-linejoin="round">
  <defs><linearGradient id="beg" x1="0" y1="0" x2="1" y2="1"><stop offset="0" stop-color="#0a80ee"/><stop offset="1" stop-color="#22a5ff"/></linearGradient></defs>
  <text x="22.600" y="27.800" font-family="Liberation Sans, sans-serif" font-weight="bold" font-size="24.500" textLength="27" lengthAdjust="spacingAndGlyphs" fill="url(#beg)" stroke="url(#beg)" stroke-width=".7">Be</text>
  <!-- add -->
  <circle cx="103" cy="19" r="7.6"/><path d="M99.300 19h7.400M103 15.300v7.400"/>
  <!-- grid plus -->
  <path d="M155.800 11.800H141.800V26.300H155.800M148.600 11.800V26.300M141.800 19H148.600" stroke-linecap="butt" stroke-linejoin="miter"/><path d="M153.200 19h5M155.700 16.500v5" stroke-width="1.700"/>
  <!-- sort -->
  <path d="M191 12V26M187.600 22.600L191 26L194.400 22.600M199 26V12M195.600 15.400L199 12L202.400 15.400"/>
  <!-- import window -->
  <path d="M237.500 26H233.600V11.800H248.400V26H244.500M233.600 15H248.400M241 19.500V27M238.600 24.600L241 27L243.400 24.600" stroke-linecap="butt" stroke-linejoin="miter"/>
  <!-- history -->
  <path d="M282.200 13.300A7.700 7.700 0 1 0 287 11.500M287 11.500L289.800 9.200M287 11.500L289.600 14" /><path d="M284.700 17.600H287.400V22.300" stroke-linejoin="miter"/>
  <!-- gear -->
  <path d="M331.75 9.68 L334.25 9.68 L334.66 12.10 L336.71 12.95 L338.70 11.53 L340.47 13.30 L339.05 15.29 L339.90 17.34 L342.32 17.75 L342.32 20.25 L339.90 20.66 L339.05 22.71 L340.47 24.70 L338.70 26.47 L336.71 25.05 L334.66 25.90 L334.25 28.32 L331.75 28.32 L331.34 25.90 L329.29 25.05 L327.30 26.47 L325.53 24.70 L326.95 22.71 L326.10 20.66 L323.68 20.25 L323.68 17.75 L326.10 17.34 L326.95 15.29 L325.53 13.30 L327.30 11.53 L329.29 12.95 L331.34 12.10 Z" stroke-width="1.5"/><circle cx="333" cy="19" r="2.600" stroke-width="1.5"/>
  <!-- page name -->
  <text x="797" y="24.200" font-family="Liberation Sans, sans-serif" font-size="14.200" fill="#fff" stroke="none" textLength="47" lengthAdjust="spacingAndGlyphs">ABOUT</text>
  <path d="M854.500 16.700L860 22.200L865.500 16.700" stroke-width="2"/>
  <!-- devices -->
  <g stroke="#d6d6da" stroke-width="1.5">
    <rect x="914" y="12.500" width="14" height="9.500" rx="1.200"/><path d="M918 25.200H924M921 22V25" stroke-width="1.500"/>
    <path d="M947.500 24V14.200A.8 .8 0 0 1 948.300 13.400H957.700A.8 .8 0 0 1 958.500 14.200V24M945.400 24.700H960.600" stroke-linejoin="miter"/>
    <rect x="980.500" y="13" width="9" height="12" rx="1.300"/>
    <rect x="1013.700" y="14.300" width="6.600" height="10.700" rx="1.300"/><circle cx="1017" cy="21.800" r=".6" fill="#d6d6da" stroke-width=".8"/>
  </g>
  <!-- wordpress -->
  <circle cx="1480" cy="18.800" r="8.900" stroke-width="1.300"/>
  <text x="1480" y="25" font-family="Liberation Serif, serif" font-weight="bold" font-size="17" fill="#fff" stroke="none" text-anchor="middle" textLength="15" lengthAdjust="spacingAndGlyphs">W</text>
  <!-- help -->
  <circle cx="1522" cy="18.800" r="8.200" stroke-width="1.500"/>
  <text x="1522" y="23.300" font-family="Liberation Sans, sans-serif" font-weight="bold" font-size="12.500" fill="#fff" stroke="none" text-anchor="middle">?</text>
  <path d="M1540.200 17H1547.800L1544 21.200Z" fill="#fff" stroke="none"/>
  <!-- css -->
  <path d="M1568 11.600C1566 11.600 1565.600 12.600 1565.600 14V16.500C1565.600 18 1565 18.800 1563.600 19C1565 19.200 1565.600 20 1565.600 21.500V24C1565.600 25.400 1566 26.400 1568 26.400M1578 11.600C1580 11.600 1580.400 12.600 1580.400 14V16.500C1580.400 18 1581 18.800 1582.400 19C1581 19.200 1580.400 20 1580.400 21.500V24C1580.400 25.400 1580 26.400 1578 26.400" stroke-width="1.700"/>
  <text x="1573" y="21.300" font-family="Liberation Sans, sans-serif" font-weight="bold" font-size="6.300" fill="#e8e8ea" stroke="none" text-anchor="middle" textLength="9.800" lengthAdjust="spacingAndGlyphs">CSS</text>
  <!-- layers -->
  <g stroke="#8b8b90" stroke-width="1.400" stroke-linejoin="miter"><path d="M1611 11.200L1619 15L1611 18.800L1603 15Z"/><path d="M1603 19L1611 22.800L1619 19M1603 23L1611 26.800L1619 23"/></g>
  <!-- undo / redo -->
  <path d="M1642.600 16.200H1651.800A4.200 4.200 0 0 1 1651.800 24.600H1645M1645.800 13L1642.600 16.200L1645.800 19.400" stroke-width="1.700"/>
  <path d="M1693.400 16.200H1684.200A4.200 4.200 0 0 0 1684.200 24.600H1691M1690.200 13L1693.400 16.200L1690.200 19.400" stroke="#6d6d72" stroke-width="1.700"/>
  <!-- preview window -->
  <rect x="1716.300" y="11.800" width="17.400" height="14.600" rx="1.600" stroke-width="1.600"/><path d="M1716.300 15.200H1733.700" stroke-width="1.400"/>
  <path d="M1721 23.600C1721.400 21.600 1722.800 20.700 1725.200 20.700V19L1728.800 21.500L1725.200 24V22.400C1723.400 22.300 1722 22.600 1721 23.600Z" fill="#fff" stroke-width=".6"/>
  <!-- eye frame -->
  <path d="M1753.800 15V11.900H1757.400M1768.600 11.900H1772.200V15M1772.200 23V26.100H1768.600M1757.400 26.100H1753.800V23" stroke-width="1.700" stroke-linecap="butt" stroke-linejoin="miter"/>
  <path d="M1756.300 19C1758 15.800 1760.400 14.600 1763 14.600C1765.600 14.600 1768 15.800 1769.700 19C1768 22.200 1765.600 23.400 1763 23.400C1760.400 23.400 1758 22.200 1756.300 19Z" stroke-width="1.500"/><circle cx="1763" cy="19" r="1.700" fill="#fff" stroke-width="1"/>
</svg>
</div>

<!-- LEFT PANEL -->
<div id="panel">
  <div id="phead"><svg class="hic" width="20" height="22" viewBox="25 56 20 22" style="position:absolute;left:25px;top:13.900px"><g fill="#c9d4ff"><path d="M27.200 60.200H28.800L29.600 58.500H33.400L34.200 60.200H35.800V66.800H27.200Z"/><circle cx="31.500" cy="63.300" r="1.700" fill="#3f3e44"/><path d="M34.600 61.700H40.900V70.300A1.900 1.900 0 1 1 39.600 68.500V63.400H35.900V70.300A1.900 1.900 0 1 1 34.600 68.500Z"/><rect x="30" y="74.200" width="2" height="1.900"/><rect x="33" y="74.200" width="2" height="1.900"/><rect x="36" y="74.200" width="2" height="1.900"/></g></svg><div class="title">Media Carousel</div><svg width="16" height="16" viewBox="0 0 16 16" style="position:absolute;left:310px;top:17px"><path d="M2.700 2.700L13.300 13.300M13.300 2.700L2.700 13.300" stroke="#fff" stroke-width="2.100" stroke-linecap="butt"/></svg></div>
  <div id="tabs"><span class="on" style="left:69px">Settings</span><span style="left:176px;letter-spacing:.25px">Style</span><span style="left:283px;letter-spacing:.78px">Advanced</span><i></i></div>
  <div class="lbl" style="top:101px">Bulk add media</div>
  <div id="browse">Browse</div>
  <div class="dash" style="top:181px"></div>
  <div class="lbl" style="top:195px">Items</div>
  <div class="item" style="top:219px"><svg class="chev" viewBox="0 0 12 8"><path d="M1.2 1.5L6 6.300L10.800 1.500" fill="none" stroke="#fff" stroke-width="2" stroke-linecap="round" stroke-linejoin="round"/></svg><div class="th"><svg width="52" height="70"><use href="#cov1" width="52" height="70"/></svg></div><div class="b b1"><svg viewBox="0 0 24 24" width="24" height="24" fill="none" stroke="#fff" stroke-width="1.500" stroke-linecap="round" stroke-linejoin="round"><rect x="11.400" y="6.600" width="6" height="6" rx="1.500"/><path d="M9.300 10.400H8.400A1.800 1.800 0 0 0 6.600 12.200V15.600A1.800 1.800 0 0 0 8.400 17.400H11.800A1.800 1.800 0 0 0 13.600 15.600V14.700"/></svg></div><div class="b b2"><svg viewBox="0 0 24 24" width="24" height="24" fill="none" stroke="#fff" stroke-width="1.500" stroke-linecap="round" stroke-linejoin="round"><path d="M6.500 9.600H17.500M9.800 9.400V7.200A.9 .9 0 0 1 10.700 6.300H13.300A.9 .9 0 0 1 14.200 7.200V9.400M7.600 9.800V16.400A1.400 1.400 0 0 0 9 17.800H15A1.400 1.400 0 0 0 16.400 16.400V9.800M10.600 12.400V15.200M13.400 12.400V15.200"/></svg></div></div>
  <div class="item" style="top:309.5px"><svg class="chev" viewBox="0 0 12 8"><path d="M1.2 1.5L6 6.300L10.800 1.500" fill="none" stroke="#fff" stroke-width="2" stroke-linecap="round" stroke-linejoin="round"/></svg><div class="th"><svg width="52" height="70"><use href="#cov2" width="52" height="70"/></svg></div><div class="b b1"><svg viewBox="0 0 24 24" width="24" height="24" fill="none" stroke="#fff" stroke-width="1.500" stroke-linecap="round" stroke-linejoin="round"><rect x="11.400" y="6.600" width="6" height="6" rx="1.500"/><path d="M9.300 10.400H8.400A1.800 1.800 0 0 0 6.600 12.200V15.600A1.800 1.800 0 0 0 8.400 17.400H11.800A1.800 1.800 0 0 0 13.600 15.600V14.700"/></svg></div><div class="b b2"><svg viewBox="0 0 24 24" width="24" height="24" fill="none" stroke="#fff" stroke-width="1.500" stroke-linecap="round" stroke-linejoin="round"><path d="M6.500 9.600H17.500M9.800 9.400V7.200A.9 .9 0 0 1 10.700 6.300H13.300A.9 .9 0 0 1 14.200 7.200V9.400M7.600 9.800V16.400A1.400 1.400 0 0 0 9 17.800H15A1.400 1.400 0 0 0 16.400 16.400V9.800M10.600 12.400V15.200M13.400 12.400V15.200"/></svg></div></div>
  <div class="item" style="top:400px"><svg class="chev" viewBox="0 0 12 8"><path d="M1.2 1.5L6 6.300L10.800 1.500" fill="none" stroke="#fff" stroke-width="2" stroke-linecap="round" stroke-linejoin="round"/></svg><div class="th"><svg width="52" height="70"><use href="#cov3" width="52" height="70"/></svg></div><div class="b b1"><svg viewBox="0 0 24 24" width="24" height="24" fill="none" stroke="#fff" stroke-width="1.500" stroke-linecap="round" stroke-linejoin="round"><rect x="11.400" y="6.600" width="6" height="6" rx="1.500"/><path d="M9.300 10.400H8.400A1.800 1.800 0 0 0 6.600 12.200V15.600A1.800 1.800 0 0 0 8.400 17.400H11.800A1.800 1.800 0 0 0 13.600 15.600V14.700"/></svg></div><div class="b b2"><svg viewBox="0 0 24 24" width="24" height="24" fill="none" stroke="#fff" stroke-width="1.500" stroke-linecap="round" stroke-linejoin="round"><path d="M6.500 9.600H17.500M9.800 9.400V7.200A.9 .9 0 0 1 10.700 6.300H13.300A.9 .9 0 0 1 14.200 7.200V9.400M7.600 9.800V16.400A1.400 1.400 0 0 0 9 17.800H15A1.400 1.400 0 0 0 16.400 16.400V9.800M10.600 12.400V15.200M13.400 12.400V15.200"/></svg></div></div>
  <div class="item" style="top:490.5px"><svg class="chev" viewBox="0 0 12 8"><path d="M1.2 1.5L6 6.300L10.800 1.500" fill="none" stroke="#fff" stroke-width="2" stroke-linecap="round" stroke-linejoin="round"/></svg><div class="th"><svg width="52" height="70"><use href="#cov4" width="52" height="70"/></svg></div><div class="b b1"><svg viewBox="0 0 24 24" width="24" height="24" fill="none" stroke="#fff" stroke-width="1.500" stroke-linecap="round" stroke-linejoin="round"><rect x="11.400" y="6.600" width="6" height="6" rx="1.500"/><path d="M9.300 10.400H8.400A1.800 1.800 0 0 0 6.600 12.200V15.600A1.800 1.800 0 0 0 8.400 17.400H11.800A1.800 1.800 0 0 0 13.600 15.600V14.700"/></svg></div><div class="b b2"><svg viewBox="0 0 24 24" width="24" height="24" fill="none" stroke="#fff" stroke-width="1.500" stroke-linecap="round" stroke-linejoin="round"><path d="M6.500 9.600H17.500M9.800 9.400V7.200A.9 .9 0 0 1 10.700 6.300H13.300A.9 .9 0 0 1 14.200 7.200V9.400M7.600 9.800V16.400A1.400 1.400 0 0 0 9 17.800H15A1.400 1.400 0 0 0 16.400 16.400V9.800M10.600 12.400V15.200M13.400 12.400V15.200"/></svg></div></div>
  <div class="item" style="top:581px"><svg class="chev" viewBox="0 0 12 8"><path d="M1.2 1.5L6 6.300L10.800 1.500" fill="none" stroke="#fff" stroke-width="2" stroke-linecap="round" stroke-linejoin="round"/></svg><div class="th"><svg width="52" height="70"><use href="#cov5" width="52" height="70"/></svg></div><div class="b b1"><svg viewBox="0 0 24 24" width="24" height="24" fill="none" stroke="#fff" stroke-width="1.500" stroke-linecap="round" stroke-linejoin="round"><rect x="11.400" y="6.600" width="6" height="6" rx="1.500"/><path d="M9.300 10.400H8.400A1.800 1.800 0 0 0 6.600 12.200V15.600A1.800 1.800 0 0 0 8.400 17.400H11.800A1.800 1.800 0 0 0 13.600 15.600V14.700"/></svg></div><div class="b b2"><svg viewBox="0 0 24 24" width="24" height="24" fill="none" stroke="#fff" stroke-width="1.500" stroke-linecap="round" stroke-linejoin="round"><path d="M6.500 9.600H17.500M9.800 9.400V7.200A.9 .9 0 0 1 10.700 6.300H13.300A.9 .9 0 0 1 14.200 7.200V9.400M7.600 9.800V16.400A1.400 1.400 0 0 0 9 17.800H15A1.400 1.400 0 0 0 16.400 16.400V9.800M10.600 12.400V15.200M13.400 12.400V15.200"/></svg></div></div>
  <div class="addp"><svg width="12" height="12" viewBox="0 0 12 12" style="position:absolute;left:26px;top:687px"><path d="M6 1.200V10.800M1.200 6H10.800" stroke="#4a6f98" stroke-width="1.300"/></svg><span class="addnew">Add new</span></div>
  <div class="dash" style="top:725px"></div>
  <div class="lbl" style="top:739px;letter-spacing:-.1px">Box style</div>
  <svg width="16" height="16" viewBox="0 0 16 16" style="position:absolute;left:315.500px;top:740px"><circle cx="8" cy="8" r="6.300" fill="none" stroke="#fff" stroke-width="1.400"/><text x="8" y="11.400" font-family="Liberation Sans, sans-serif" font-weight="bold" font-size="9.500" fill="#fff" text-anchor="middle">?</text></svg>
  <div class="seg on first" style="left:16px;top:763px;width:64px">Vertical</div>
  <div class="seg" style="left:80px;top:763px;width:76px">Horizontal</div>
  <div class="seg last" style="left:155px;top:763px;width:64px">Overlay</div>
  <div class="dash" style="top:816px"></div>
  <div class="lbl" style="top:830px">Columns</div>
  <svg width="70" height="14" viewBox="84 874 70 14" style="position:absolute;left:84px;top:831px" fill="none" stroke-linecap="round" stroke-linejoin="round"><g stroke="#fff" stroke-width="1.300"><rect x="86.300" y="876.200" width="11.400" height="7" rx=".8"/><path d="M89.500 886H94.500M92 883.400V886"/></g><g stroke="#6a6a70" stroke-width="1.200"><path d="M104.500 884V877.500H113.500V884M103 885H115"/><rect x="122.800" y="876.800" width="6.400" height="8.400" rx="1"/><rect x="140.800" y="877.200" width="4.600" height="8" rx="1"/><path d="M143.100 883.300V883.400"/></g></svg>
  <div class="num" style="left:16px;width:22px">1</div><div class="num" style="left:37.500px;width:25px">2</div><div class="num on" style="left:62px;width:24px">3</div><div class="num" style="left:85.500px;width:24.500px">4</div><div class="num" style="left:109.500px;width:25px">5</div><div class="num" style="left:134px;width:25.500px">6</div>
  <div id="scroll"></div>
</div>
</body>
</html>
